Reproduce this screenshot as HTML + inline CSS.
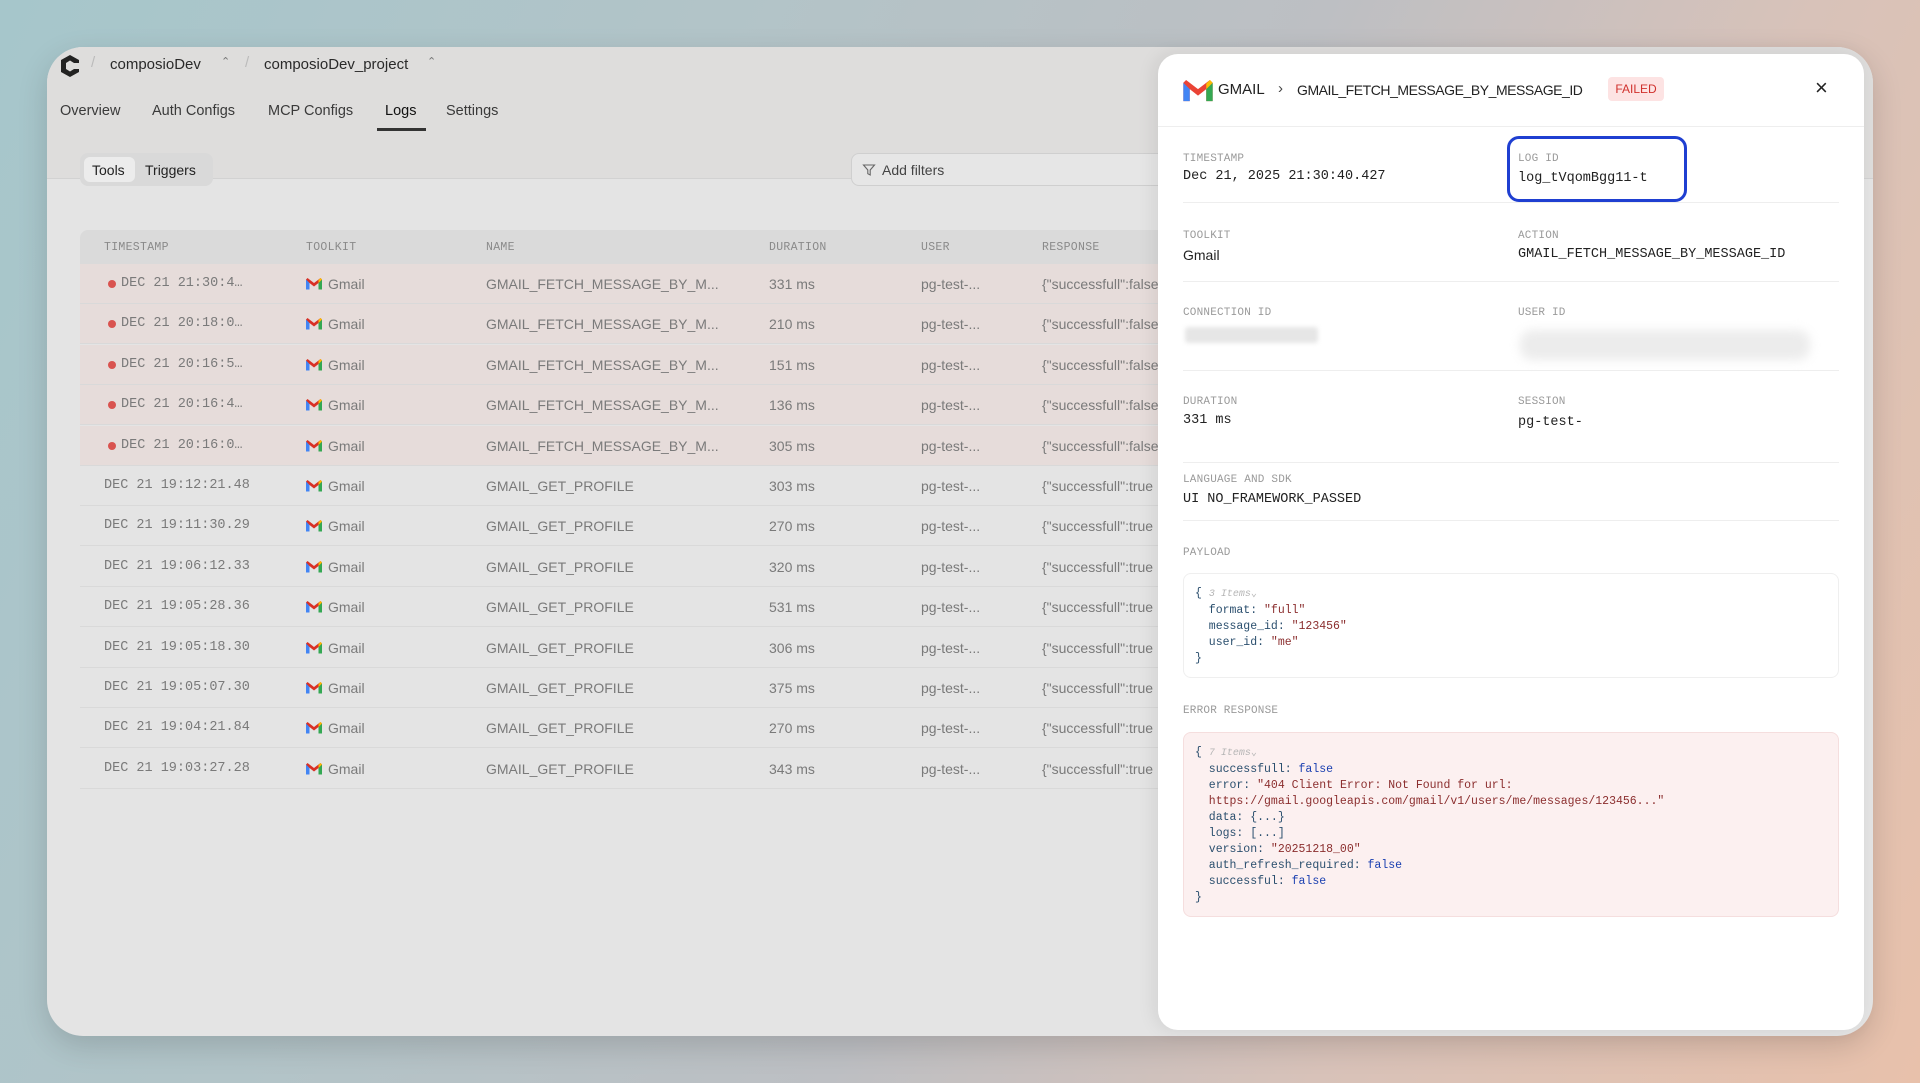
<!DOCTYPE html>
<html><head><meta charset="utf-8"><style>
*{box-sizing:border-box;margin:0;padding:0}
body{width:1920px;height:1083px;overflow:hidden;position:relative;font-family:"Liberation Sans",sans-serif;
background:linear-gradient(115deg,#a6c6cb 0%,#b2c4c8 30%,#bdbfc3 55%,#d8c2b9 75%,#e8c1ab 100%);}
.win{position:absolute;left:47px;top:47px;width:1826px;height:989px;border-radius:36px;background:#e4e4e4;overflow:hidden;box-shadow:0 10px 30px rgba(0,0,0,.15)}
.top{position:absolute;left:0;top:0;right:0;height:132px;background:#dedddc;border-bottom:1px solid #d2d2d2}
.t{position:absolute;white-space:nowrap}
.crumb{font-size:15px;color:#2a2a2a}
.tab{font-size:14.5px;color:#3a3a3a;top:56px}
.mono{font-family:"Liberation Mono",monospace}
.th{font-family:"Liberation Mono",monospace;font-size:11.5px;color:#8a8a8a;letter-spacing:.3px}
.row{position:absolute;left:33px;width:1150px;height:40px;border-bottom:1px solid #d9d9d9;font-size:14px;color:#7a7a7a;overflow:hidden}
.row span{position:absolute;top:12px;white-space:nowrap}
.red{background:#e6dcda}
.dot{width:8px;height:8px;border-radius:50%;background:#d9534f;position:absolute;left:28px;top:16px}
.panel{position:absolute;left:1158px;top:54px;width:706px;height:976px;background:#fff;border-radius:20px;box-shadow:-4px 0 18px rgba(0,0,0,.08)}
.lbl{position:absolute;font-family:"Liberation Mono",monospace;font-size:11px;color:#9a9a9a;letter-spacing:.2px}
.val{position:absolute;font-family:"Liberation Mono",monospace;font-size:13.5px;color:#222}
.hr{position:absolute;left:25px;right:25px;height:1px;background:#eeeeee}
.code{position:absolute;font-family:"Liberation Mono",monospace;font-size:11.5px;line-height:16px;color:#2b4f6e}
.s{color:#8b2e2e}.b{color:#1a3fb0}.g{color:#b5b5b5;font-style:italic;font-size:10px}
</style></head><body>
<div class="win">
 <div class="top">
  <svg style="position:absolute;left:12px;top:7px" width="22" height="24" viewBox="0 0 22 24"><path d="M11 1 L20 6 V9 H15 L11 6.5 L7 9 V15 L11 17.5 L15 15 H20 V18 L11 23 L2 18 V6 Z" fill="#222"/><path d="M9 10 h5 v4 h-5z" fill="#dedddc"/></svg>
  <div class="t crumb" style="left:44px;top:7px;color:#bbb">/</div>
  <div class="t crumb" style="left:63px;top:9px">composioDev</div>
  <div class="t" style="left:174px;top:8px;font-size:11px;color:#777">⌃</div>
  <div class="t crumb" style="left:198px;top:7px;color:#bbb">/</div>
  <div class="t crumb" style="left:217px;top:9px">composioDev_project</div>
  <div class="t" style="left:380px;top:8px;font-size:11px;color:#777">⌃</div>
  <div class="t tab" style="left:13px">Overview</div>
  <div class="t tab" style="left:105px">Auth Configs</div>
  <div class="t tab" style="left:221px">MCP Configs</div>
  <div class="t tab" style="left:338px;color:#111">Logs</div>
  <div style="position:absolute;left:330px;top:81px;width:49px;height:3px;background:#333"></div>
  <div class="t tab" style="left:399px">Settings</div>
 </div>
 <div style="position:absolute;left:33px;top:106px;width:133px;height:33px;border-radius:8px;background:#d9d9d9"></div>
 <div style="position:absolute;left:37px;top:110px;width:51px;height:25px;border-radius:6px;background:#ececec"></div>
 <div class="t" style="left:45px;top:115px;font-size:14px;color:#222">Tools</div>
 <div class="t" style="left:98px;top:115px;font-size:14px;color:#222">Triggers</div>
 <div style="position:absolute;left:804px;top:106px;width:400px;height:33px;border-radius:8px;border:1px solid #cfcfcf;background:#e6e6e6"></div>
 <svg style="position:absolute;left:815px;top:116px" width="14" height="14" viewBox="0 0 14 14"><path d="M1.5 2h11l-4.3 5v5l-2.4-1.3V7z" fill="none" stroke="#666" stroke-width="1.1"/></svg>
 <div class="t" style="left:835px;top:115px;font-size:14px;color:#444">Add filters</div>
 <div style="position:absolute;left:33px;top:183px;width:1150px;height:34px;background:#dadada;border-radius:8px 8px 0 0"></div>
 <div class="t th" style="left:57px;top:194px">TIMESTAMP</div>
 <div class="t th" style="left:259px;top:194px">TOOLKIT</div>
 <div class="t th" style="left:439px;top:194px">NAME</div>
 <div class="t th" style="left:722px;top:194px">DURATION</div>
 <div class="t th" style="left:874px;top:194px">USER</div>
 <div class="t th" style="left:995px;top:194px">RESPONSE</div>
 <div id="rows"></div>
</div>
<script>
var d=[["DEC 21 21:30:4…","GMAIL_FETCH_MESSAGE_BY_M...","331 ms",1],["DEC 21 20:18:0…","GMAIL_FETCH_MESSAGE_BY_M...","210 ms",1],["DEC 21 20:16:5…","GMAIL_FETCH_MESSAGE_BY_M...","151 ms",1],["DEC 21 20:16:4…","GMAIL_FETCH_MESSAGE_BY_M...","136 ms",1],["DEC 21 20:16:0…","GMAIL_FETCH_MESSAGE_BY_M...","305 ms",1],["DEC 21 19:12:21.48","GMAIL_GET_PROFILE","303 ms",0],["DEC 21 19:11:30.29","GMAIL_GET_PROFILE","270 ms",0],["DEC 21 19:06:12.33","GMAIL_GET_PROFILE","320 ms",0],["DEC 21 19:05:28.36","GMAIL_GET_PROFILE","531 ms",0],["DEC 21 19:05:18.30","GMAIL_GET_PROFILE","306 ms",0],["DEC 21 19:05:07.30","GMAIL_GET_PROFILE","375 ms",0],["DEC 21 19:04:21.84","GMAIL_GET_PROFILE","270 ms",0],["DEC 21 19:03:27.28","GMAIL_GET_PROFILE","343 ms",0]];
var m='<svg width="16" height="12" viewBox="0 0 16 12" style="position:absolute;left:0;top:2px"><path d="M0 1.5v10h3.5V5L8 8.5 12.5 5v6.5H16v-10L14.5 0 8 5 1.5 0z" fill="#d93025"/><path d="M0 1.5v10h3.5V5z" fill="#4285f4"/><path d="M12.5 5v6.5H16v-10z" fill="#34a853"/><path d="M14.5 0 16 1.5 12.5 5V2z" fill="#fbbc04"/></svg>';
var h='';d.forEach(function(r,i){h+='<div class="row'+(r[3]?' red':'')+'" style="top:'+(217+i*40.4)+'px">'+(r[3]?'<div class="dot"></div>':'')+'<span class="mono" style="left:'+(r[3]?41:24)+'px;font-size:13.5px">'+r[0]+'</span><span style="left:226px;padding-left:22px">'+m+'Gmail</span><span style="left:406px">'+r[1]+'</span><span style="left:689px">'+r[2]+'</span><span style="left:841px">pg-test-...</span><span style="left:962px">{"successfull":'+(r[3]?'false':'true')+'</span></div>'});
document.getElementById('rows').innerHTML=h;
</script>
<div class="panel">
 <svg style="position:absolute;left:25px;top:26px" width="30" height="22" viewBox="0 0 16 12"><path d="M0 1.5v10h3.5V5L8 8.5 12.5 5v6.5H16v-10L14.5 0 8 5 1.5 0z" fill="#ea4335"/><path d="M0 1.5v10h3.5V5z" fill="#4285f4"/><path d="M12.5 5v6.5H16v-10z" fill="#34a853"/><path d="M14.5 0 16 1.5 12.5 5V2z" fill="#fbbc04"/></svg>
 <div class="t" style="left:60px;top:27px;font-size:15px;color:#222">GMAIL</div>
 <div class="t" style="left:120px;top:26px;font-size:15px;color:#444">›</div>
 <div class="t" style="left:139px;top:28px;font-size:14px;letter-spacing:-0.45px;color:#222">GMAIL_FETCH_MESSAGE_BY_MESSAGE_ID</div>
 <div class="t" style="left:450px;top:23px;width:56px;height:24px;border-radius:4px;background:#fde3e3;color:#d0312d;font-size:12px;text-align:center;line-height:24px">FAILED</div>
 <div class="t" style="left:657px;top:21px;font-size:22px;color:#222">×</div>
 <div class="hr" style="left:0;right:0;top:72px"></div>
 <div class="lbl" style="left:25px;top:99px">TIMESTAMP</div><div class="val" style="left:25px;top:115px">Dec 21, 2025 21:30:40.427</div>
 <div style="position:absolute;left:349px;top:82px;width:180px;height:66px;border:3px solid #1f3fd1;border-radius:12px"></div>
 <div class="lbl" style="left:360px;top:99px">LOG ID</div><div class="val" style="left:360px;top:117px">log_tVqomBgg11-t</div>
 <div class="hr" style="top:148px"></div>
 <div class="lbl" style="left:25px;top:176px">TOOLKIT</div><div class="val" style="left:25px;top:193px;font-family:'Liberation Sans',sans-serif;font-size:14px">Gmail</div>
 <div class="lbl" style="left:360px;top:176px">ACTION</div><div class="val" style="left:360px;top:193px">GMAIL_FETCH_MESSAGE_BY_MESSAGE_ID</div>
 <div class="hr" style="top:227px"></div>
 <div class="lbl" style="left:25px;top:253px">CONNECTION ID</div>
 <div style="position:absolute;left:27px;top:273px;width:133px;height:16px;background:#e6e6e6;border-radius:3px;filter:blur(2px)"></div>
 <div class="lbl" style="left:360px;top:253px">USER ID</div>
 <div style="position:absolute;left:362px;top:276px;width:290px;height:30px;background:#ececec;border-radius:12px;filter:blur(5px)"></div>
 <div class="hr" style="top:316px"></div>
 <div class="lbl" style="left:25px;top:342px">DURATION</div><div class="val" style="left:25px;top:359px">331 ms</div>
 <div class="lbl" style="left:360px;top:342px">SESSION</div><div class="val" style="left:360px;top:361px">pg-test-</div>
 <div class="hr" style="top:408px"></div>
 <div class="lbl" style="left:25px;top:420px">LANGUAGE AND SDK</div><div class="val" style="left:25px;top:438px">UI NO_FRAMEWORK_PASSED</div>
 <div class="hr" style="top:466px"></div>
 <div class="lbl" style="left:25px;top:493px">PAYLOAD</div>
 <div style="position:absolute;left:25px;top:519px;width:656px;height:105px;border:1px solid #efefef;border-radius:8px"></div>
 <div class="code" style="left:37px;top:532px">{ <span class="g">3 Items⌄</span><br>&nbsp;&nbsp;format: <span class="s">"full"</span><br>&nbsp;&nbsp;message_id: <span class="s">"123456"</span><br>&nbsp;&nbsp;user_id: <span class="s">"me"</span><br>}</div>
 <div class="lbl" style="left:25px;top:651px">ERROR RESPONSE</div>
 <div style="position:absolute;left:25px;top:678px;width:656px;height:185px;border:1px solid #f5dede;border-radius:8px;background:#fcf0f0"></div>
 <div class="code" style="left:37px;top:691px">{ <span class="g">7 Items⌄</span><br>&nbsp;&nbsp;successfull: <span class="b">false</span><br>&nbsp;&nbsp;error: <span class="s">"404 Client Error: Not Found for url:<br>&nbsp;&nbsp;https://gmail.googleapis.com/gmail/v1/users/me/messages/123456..."</span><br>&nbsp;&nbsp;data: {...}<br>&nbsp;&nbsp;logs: [...]<br>&nbsp;&nbsp;version: <span class="s">"20251218_00"</span><br>&nbsp;&nbsp;auth_refresh_required: <span class="b">false</span><br>&nbsp;&nbsp;successful: <span class="b">false</span><br>}</div>
</div>
</body></html>
